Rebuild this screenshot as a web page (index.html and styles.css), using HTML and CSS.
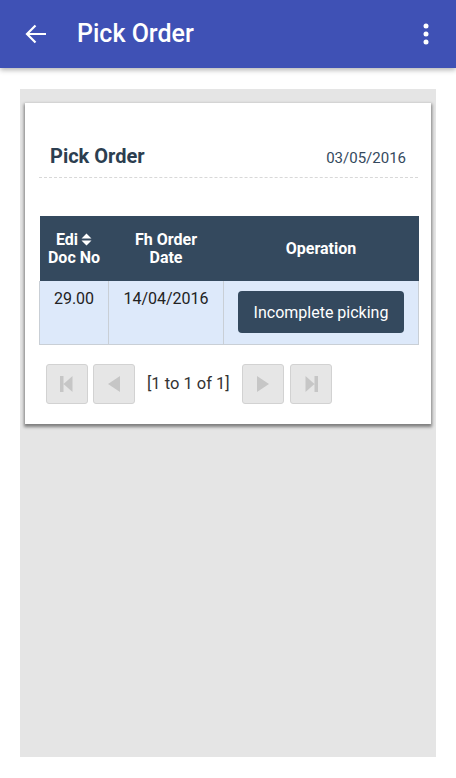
FILE: index.html
```html
<!DOCTYPE html>
<html lang="en">
<head>
<meta charset="utf-8">
<title>Pick Order</title>
<link rel="stylesheet" href="styles.css">
</head>
<body>
<header class="appbar">
  <svg class="back" width="22" height="20" viewBox="0 0 22 20" aria-hidden="true">
    <path d="M21 10H2.5M10.5 1.5L2 10l8.5 8.5" fill="none" stroke="#fff" stroke-width="2.2"/>
  </svg>
  <h1 class="appbar-title">Pick Order</h1>
  <svg class="kebab" width="6" height="22" viewBox="0 0 6 22" aria-hidden="true">
    <circle cx="3" cy="3" r="2.5" fill="#fff"/>
    <circle cx="3" cy="11" r="2.5" fill="#fff"/>
    <circle cx="3" cy="19" r="2.5" fill="#fff"/>
  </svg>
</header>
<main class="content">
  <div class="panel">
    <section class="card">
      <div class="card-head">
        <h2 class="card-title">Pick Order</h2>
        <span class="card-date">03/05/2016</span>
      </div>
      <table class="grid">
        <colgroup>
          <col class="c1"><col class="c2"><col class="c3">
        </colgroup>
        <thead>
          <tr>
            <th>Edi<svg class="sort" width="11" height="13" viewBox="0 0 11 13" aria-hidden="true"><path d="M0.5 5.6L5.5 0.4 10.5 5.6z M0.5 7.4L10.5 7.4 5.5 12.6z" fill="#fff"/></svg><br>Doc No</th>
            <th>Fh Order<br>Date</th>
            <th>Operation</th>
          </tr>
        </thead>
        <tbody>
          <tr>
            <td>29.00</td>
            <td>14/04/2016</td>
            <td class="op"><button class="btn">Incomplete picking</button></td>
          </tr>
        </tbody>
      </table>
      <nav class="pager">
        <span class="pbtn"><svg width="14" height="16" viewBox="0 0 14 16"><path d="M0 0h3.5v16H0z M3.5 8L12.5 0v16z" fill="#c6c6c6"/></svg></span>
        <span class="pbtn"><svg width="12" height="16" viewBox="0 0 12 16"><path d="M0 8L12 0v16z" fill="#c6c6c6"/></svg></span>
        <span class="pinfo">[1 to 1 of 1]</span>
        <span class="pbtn"><svg width="12" height="16" viewBox="0 0 12 16"><path d="M12 8L0 0v16z" fill="#c6c6c6"/></svg></span>
        <span class="pbtn"><svg width="14" height="16" viewBox="0 0 14 16"><path d="M10.5 0H14v16h-3.5z M10.5 8L1.5 0v16z" fill="#c6c6c6"/></svg></span>
      </nav>
    </section>
  </div>
</main>
</body>
</html>
```
FILE: styles.css
```css
* { box-sizing: border-box; }
html, body { margin: 0; padding: 0; background: #fff; }
body { font-family: Roboto, "Liberation Sans", Arial, sans-serif; color: #222; }

.appbar {
  height: 68px;
  background: #3f51b5;
  display: flex;
  align-items: center;
  padding: 0 27px 0 25px;
  box-shadow: 0 2px 5px rgba(0,0,0,0.3);
  position: relative;
  z-index: 1;
}
.back { display: block; flex: none; }
.appbar-title {
  margin: 0 0 0 30px;
  flex: 1;
  font-size: 25px;
  font-weight: 500;
  color: #fff;
  line-height: 30px;
}
.kebab { display: block; flex: none; }

.content { padding: 21px 20px 21px 20px; }
.panel {
  background: #e5e5e5;
  height: 668px;
  padding: 14px 5px 0 5px;
}
.card {
  background: #fff;
  width: 406px;
  padding: 0 13px 20px 14px;
  box-shadow: 0 2px 3px 1px rgba(0,0,0,0.45);
}
.card-head {
  display: flex;
  justify-content: space-between;
  align-items: baseline;
  padding: 41px 12px 9px 11px;
  border-bottom: 1px dashed #d8d8d8;
  margin-bottom: 38px;
}
.card-title {
  margin: 0;
  font-size: 20px;
  font-weight: 700;
  line-height: 24px;
  color: #2c3e50;
}
.card-date { font-size: 15px; color: #34495e; }

.grid {
  width: 100%;
  border-collapse: collapse;
  table-layout: fixed;
  font-size: 16px;
}
.c1 { width: 69px; }
.c2 { width: 115px; }
.c3 { width: 195px; }
.grid th {
  background: #34495e;
  color: #fff;
  font-weight: 700;
  height: 65px;
  line-height: 18px;
  padding: 0 4px;
  text-align: center;
  vertical-align: middle;
}
.sort { margin-left: 3px; vertical-align: -1px; }
.grid td {
  background: #dde9fa;
  border: 1px solid #c9cfd6;
  border-top: 0;
  text-align: center;
  vertical-align: top;
  line-height: 20px;
  padding: 8px 4px;
  height: 63px;
}
.grid td.op { padding: 10px 4px; vertical-align: middle; }
.btn {
  height: 42px;
  padding: 0 13px;
  width: 166px;
  border: 0;
  border-radius: 4px;
  background: #34495e;
  color: #fff;
  font-family: Roboto, "Liberation Sans", Arial, sans-serif;
  font-size: 16px;
}

.pager {
  display: flex;
  align-items: center;
  margin-top: 19px;
  padding-left: 7px;
  gap: 5px;
}
.pbtn {
  width: 42px;
  height: 40px;
  background: #e6e6e6;
  border: 1px solid #d2d2d2;
  border-radius: 3px;
  display: flex;
  align-items: center;
  justify-content: center;
}
.pbtn:last-child { margin-left: 1px; }
.pbtn svg { display: block; }
.pinfo {
  font-size: 16.5px;
  color: #333;
  margin: 0 7px 0 7px;
}
```
